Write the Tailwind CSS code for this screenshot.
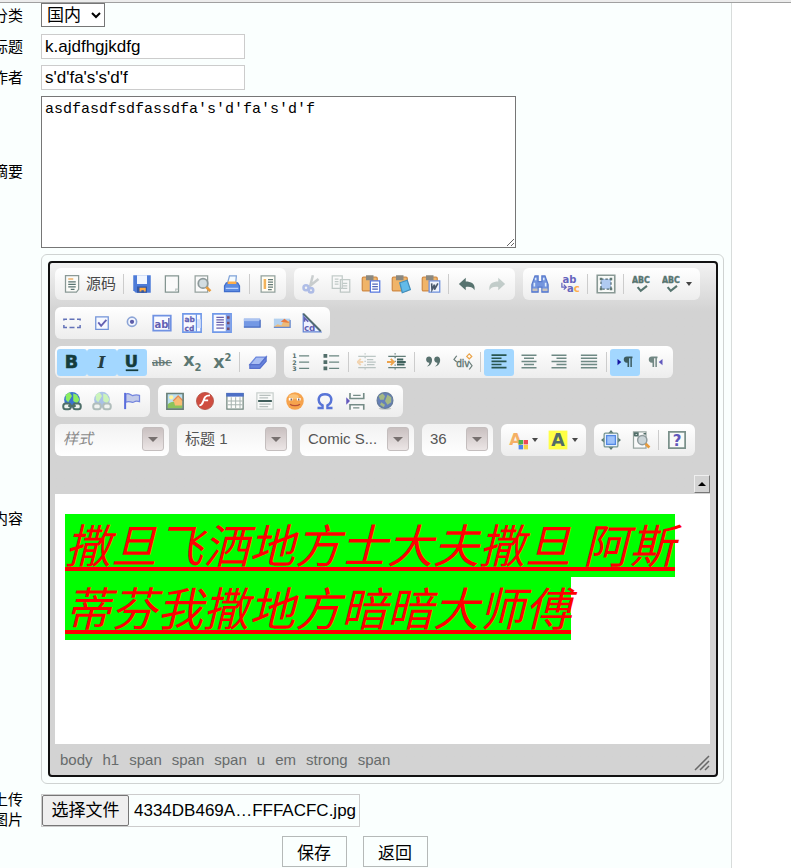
<!DOCTYPE html>
<html lang="zh-CN">
<head>
<meta charset="utf-8">
<meta name="viewport" content="width=device-width, initial-scale=1">
<title>内容编辑</title>
<script src="https://cdn.jsdelivr.net/npm/@tailwindcss/browser@4"></script>
</head>
<body class="bg-white text-black font-['Liberation_Sans','Noto_Sans_CJK_SC',sans-serif]">
<main class="mr-[59px] min-h-screen border-r border-[#d8dcdb] bg-[#fafffe]">
  <div class="-mr-[60px] h-[3px] border-b border-[#a0a0a0] bg-[#ececec]"></div>
  <form class="flex flex-col gap-1.5 [&_.lbl]:flex [&_.lbl]:w-[41px] [&_.lbl]:shrink-0 [&_.lbl]:justify-end [&_.lbl]:overflow-hidden [&_.lbl]:pr-[18px] [&_.lbl]:text-[15px] [&_.lbl]:leading-5 [&_.lbl]:whitespace-nowrap">
    <div class="flex h-[25px] items-center">
      <label class="lbl" for="cat">分类</label>
      <select id="cat" class="h-6 w-16 self-start border border-[#767676] bg-white px-px text-[17px] leading-5"><option>国内</option></select>
    </div>
    <div class="flex items-center">
      <label class="lbl" for="title">标题</label>
      <input id="title" type="text" value="k.ajdfhgjkdfg" class="h-[25px] w-[204px] border border-[#cccccc] bg-white px-[3px] text-[17px]">
    </div>
    <div class="flex items-center">
      <label class="lbl" for="author">作者</label>
      <input id="author" type="text" value="s'd'fa's's'd'f" class="h-[25px] w-[204px] border border-[#cccccc] bg-white px-[3px] text-[17px]">
    </div>
    <div class="flex items-center">
      <label class="lbl" for="summary">摘要</label>
      <textarea id="summary" class="block h-[152px] w-[475px] border border-[#767676] bg-white px-[3px] py-1 font-['Liberation_Mono',monospace] text-[15px] leading-[18px]">asdfasdfsdfassdfa's'd'fa's'd'f</textarea>
    </div>
    <div class="flex items-center">
      <span class="lbl">内容</span>
      <div class="mr-[7px] flex-1 rounded-md border border-[#cfd3d2] py-1.5 pr-[5px] pl-1.5">
        <div class="rounded-[4px] border-2 border-[#111111] bg-[#d3d3d3] bg-linear-to-b from-[#f2f2f2] to-[#d3d3d3] to-[48px] pt-[5px] pr-1.5 pl-[5px]">
          <div class="flex flex-col gap-[7px] [&_.g]:flex [&_.g]:h-8 [&_.g]:items-center [&_.g]:rounded-md [&_.g]:bg-linear-to-b [&_.g]:from-white [&_.g]:to-[#ededed] [&_.g]:pr-[3px] [&_.g]:pl-0.5 [&_.row]:flex [&_.row]:gap-2 [&_button]:flex [&_button]:h-[27px] [&_button]:min-w-[30px] [&_button]:items-center [&_button]:justify-center [&_button]:rounded-[3px] [&_svg]:size-5 [&_svg]:shrink-0 [&_i]:mr-[3px] [&_i]:ml-[2px] [&_i]:h-5 [&_i]:w-px [&_i]:bg-[#cccccc] [&_.c]:relative [&_.c]:h-8 [&_.c]:rounded-md [&_.c]:bg-linear-to-b [&_.c]:from-[#f2f2f2] [&_.c]:to-white [&_.c_select]:h-[30px] [&_.c_select]:w-full [&_.c_select]:appearance-none [&_.c_select]:pr-8 [&_.c_select]:pl-2 [&_.c_select]:text-[15px]">
            <div class="row">
              <div class="g">
                <button type="button" class="w-16 gap-1 text-[15px] text-[#484848]"><svg viewBox="0 0 16 16"><path d="M2.8 1.3h10.5v11l-1.8 2.2H2.8z" fill="#fbfbf8" stroke="#8a9996"/><path d="M5 4h4" stroke="#e9a150"/><path d="M5 6.2h6M5 8.2h6M5 10.2h6M7 12.2h3" stroke="#587370"/></svg>源码</button>
                <i></i>
                <button type="button" title="保存"><svg viewBox="0 0 16 16"><path d="M1 1h14v14H3l-2-2z" fill="#4d7bd8"/><path d="M4 1h8v7H4z" fill="#f1f6ff"/><path d="M4 10h8v5H4z" fill="#3457a2"/><path d="M6 11h5v3H6z" fill="#ffab42"/><path d="M7.500 13h2v2h-2z" fill="#3457a2"/></svg></button>
                <button type="button" title="新建"><svg viewBox="0 0 16 16"><path d="M2.700 1.500h10.500v13H2.700z" fill="#fafafa" stroke="#849591"/><path d="M11 14v-2h2" fill="none" stroke="#bbc4c2"/></svg></button>
                <button type="button" title="预览"><svg viewBox="0 0 16 16"><path d="M2.500 1.500h10v13h-10z" fill="#fafafa" stroke="#96a29f"/><circle cx="8.800" cy="7.500" r="3.800" fill="#d3dde1" stroke="#8d999a" stroke-width="1.400"/><path d="m11.500 10.500 3.200 3.200" stroke="#e79b3d" stroke-width="2.200"/></svg></button>
                <button type="button" title="打印"><svg viewBox="0 0 16 16"><path d="M6 1.500h5.500L11 7H4.500z" fill="#f4fbff" stroke="#7fa2d8"/><path d="M3.500 7 2 9.500V14h12V9.500L12.500 7z" fill="#5d8be0" stroke="#3f6dcc"/><path d="M4.500 6h7v2h-7z" fill="#ffad47"/><path d="M3 11.500h10" stroke="#b9d2ff"/></svg></button>
                <i></i>
                <button type="button" title="模板"><svg viewBox="0 0 16 16"><path d="M2.500 1.500h11v13h-11z" fill="#fffdf5" stroke="#92a19d"/><path d="M4.500 4h2v8h-2z" fill="#f2b35c"/><path d="M8 4.500h4M8 6.500h4M8 8.500h4M8 10.500h4M8 12.500h3" stroke="#667c79"/></svg></button>
              </div>
              <div class="g">
                <button type="button" title="剪切"><svg viewBox="0 0 16 16" opacity=".45"><path d="m9.500 1-2 8M14 4 6.500 10" stroke="#919b9c" stroke-width="2"/><g fill="none" stroke="#5d7cd8" stroke-width="2"><circle cx="4" cy="11" r="2"/><circle cx="8" cy="13" r="1.800"/></g></svg></button>
                <button type="button" title="复制"><svg viewBox="0 0 16 16" opacity=".45"><g fill="#fafafa" stroke="#819590"><path d="M1 1.500h8v10H1zM7.500 4.500H15v10H7.500z"/><path d="M3 4h3M3 6h3M3 8h3M9.500 7.500H13M9.500 9.500H13M9.500 11.500H13"/></g></svg></button>
                <button type="button" title="粘贴"><svg viewBox="0 0 16 16"><rect x="1" y="2.500" width="12" height="11" rx="1" fill="#f0b468" stroke="#cf8a45"/><path d="M4 1h6v4H4z" fill="#8a8880"/><path d="M7.500 5.500H15v9H7.500z" fill="#fff" stroke="#5577df"/><path d="M9 8h4.500M9 10h4.500M9 12h4.500" stroke="#5266b8"/></svg></button>
                <button type="button" title="粘贴为纯文本"><svg viewBox="0 0 16 16"><rect x="1" y="2.500" width="12" height="11" rx="1" fill="#f0b468" stroke="#cf8a45"/><path d="M4 1h6v4H4z" fill="#8a8880"/><path d="m7 7 6-2 2.500 7.500L9 15z" fill="#62bbe9" stroke="#438fbb"/></svg></button>
                <button type="button" title="从 Word 粘贴"><svg viewBox="0 0 16 16"><rect x="1" y="2.500" width="12" height="11" rx="1" fill="#f0b468" stroke="#cf8a45"/><path d="M4 1h6v4H4z" fill="#8a8880"/><path d="M6.500 5.500H15v9H6.500z" fill="#f0f4fc" stroke="#6c8edb"/><path d="m8.500 7.500.3 5 2-4v4l2.700-5" fill="none" stroke="#49596c" stroke-width="1.300"/></svg></button>
                <i></i>
                <button type="button" title="撤销"><svg viewBox="0 0 16 16"><path d="M1.500 8 7 3v3c4 0 8 1.500 7 7-1.500-2.500-3-3-7-2.700V13z" fill="#57736f"/></svg></button>
                <button type="button" title="重做"><svg viewBox="0 0 16 16" opacity=".4"><path d="M14.500 8 9 3v3c-4 0-8 1.500-7 7 1.500-2.500 3-3 7-2.700V13z" fill="#769089"/></svg></button>
              </div>
              <div class="g">
                <button type="button" title="查找"><svg viewBox="0 0 16 16"><path d="M4 1.500h2.500V6h3V1.500H12l2.500 7v6h-5v-4h-3v4h-5v-6z" fill="#7394de" stroke="#5a7acb"/><path d="M3.500 7v3M12.500 7v3M4.500 3v2M11 3v2" stroke="#dceafb" stroke-width="1.300"/><path d="M2 12.500h4M10 12.500h4" stroke="#c8c2bc" stroke-width="2"/></svg></button>
                <button type="button" title="替换"><svg viewBox="0 0 16 16" font-family="DejaVu Sans" font-weight="bold" font-size="8"><text x="2" y="7" fill="#6564bd">ab</text><text x="5.500" y="14.500" fill="#6564bd">a<tspan fill="#ffad49">c</tspan></text><path d="M1.500 7v3.500H5M3 8.500l2 2-2 2" fill="none" stroke="#6564bd"/></svg></button>
                <i></i>
                <button type="button" title="全选"><svg viewBox="0 0 16 16"><path d="M1 1h14v14H1z" fill="#f8faf8" stroke="#899995" stroke-width="1.300"/><path d="M4 4h8v8H4z" fill="#b0caf1" stroke="#506b75" stroke-dasharray="2 1.500"/><path d="M3 3h2v2H3zM11 3h2v2h-2zM3 11h2v2H3zM11 11h2v2h-2z" fill="#617975"/></svg></button>
                <i></i>
                <button type="button" title="拼写检查"><svg viewBox="0 0 16 16"><text x="0" y="7" font-family="DejaVu Sans Condensed" font-size="7" font-weight="bold" fill="#577570" stroke="#577570" stroke-width=".3">ABC</text><path d="m4.500 10.500 2.500 3 5-4" fill="none" stroke="#577570" stroke-width="1.700"/></svg></button>
                <button type="button" class="w-10" title="即时拼写检查"><svg viewBox="0 0 16 16"><text x="0" y="7" font-family="DejaVu Sans Condensed" font-size="7" font-weight="bold" fill="#577570" stroke="#577570" stroke-width=".3">ABC</text><path d="m4.500 10.500 2.500 3 5-4" fill="none" stroke="#577570" stroke-width="1.700"/></svg><span class="ml-1 border-x-[3px] border-t-4 border-x-transparent border-t-[#444444]"></span></button>
              </div>
            </div>
            <div class="row">
              <div class="g">
                <button type="button" title="表单"><svg viewBox="0 0 16 16"><path d="M1.500 6V5H4M6 5h4M12 5h2.500v1M14.500 9.500v2H12M10 11.500H6M4 11.500H1.500v-2" fill="none" stroke="#6372b8" stroke-width="1.200"/></svg></button>
                <button type="button" title="复选框"><svg viewBox="0 0 16 16"><path d="M3 3h10v10H3z" fill="#f7f9ff" stroke="#7192d8"/><path d="m5 7.500 2.300 2.800L11.500 5.500" fill="none" stroke="#6561b2" stroke-width="1.500"/></svg></button>
                <button type="button" title="单选按钮"><svg viewBox="0 0 16 16"><circle cx="8" cy="7" r="3.700" fill="#f4f7ff" stroke="#8da5d6" stroke-width="1.300"/><circle cx="8" cy="7" r="1.700" fill="#5d5da9"/></svg></button>
                <button type="button" title="单行文本"><svg viewBox="0 0 16 16"><path d="M1 2h14v12H1z" fill="#f9faff" stroke="#7092e3" stroke-width="1.400"/><text x="2" y="12" font-family="DejaVu Sans" font-weight="bold" font-size="8" fill="#625fb3">ab</text><path d="M13.500 4v9" stroke="#5059ad"/></svg></button>
                <button type="button" title="多行文本"><svg viewBox="0 0 16 16"><path d="M.7.700h14.600v14.600H.7z" fill="#f9faff" stroke="#7199e9" stroke-width="1.300"/><g font-family="DejaVu Sans" font-weight="bold" font-size="6" fill="#625fb3" stroke="#625fb3" stroke-width=".2"><text x="2" y="7">ab</text><text x="2" y="14">cd</text></g><path d="M11.500 1v14" stroke="#6996e8"/><path d="M12 5h3v7h-3z" fill="#d5e1fb"/></svg></button>
                <button type="button" title="列表"><svg viewBox="0 0 16 16"><path d="M.7.700h14.600v14.600H.7z" fill="#f9faff" stroke="#7199e9" stroke-width="1.300"/><path d="M3.500 3.500h6M3.500 5.500h6M3.500 7.500h6M3.500 9.500h6M3.500 12h6" stroke="#685fab"/><path d="M11 1h4v14h-4z" fill="#7c9be6"/><path d="M12 2.500h2v2h-2zM12 11.500h2v2h-2zM12 7h2v2h-2z" fill="#784e68"/></svg></button>
                <button type="button" title="按钮"><svg viewBox="0 0 16 16"><path d="M1.500 4.500h13v6.800h-13z" fill="#7398e4"/><path d="M1.500 4.500h13v2h-13z" fill="#acc4f1"/><path d="M1.500 11.300h13v-6" fill="none" stroke="#476bbf"/></svg></button>
                <button type="button" title="图像按钮"><svg viewBox="0 0 16 16"><path d="M1.500 4.500h13v7h-13z" fill="#b4d1ef"/><path d="m1.500 11 3-2 3 1 2-4.500 5 1v5h-13z" fill="#edbb79"/><path d="m7 7 3-2.500L14 8z" fill="#e8793f"/><path d="M1.500 11.500h13v-6" fill="none" stroke="#6589d0"/></svg></button>
                <button type="button" title="隐藏域"><svg viewBox="0 0 16 16"><path d="M1 1v14h14z" fill="#eef2ff" stroke="#6383d4"/><text x="1.500" y="14" font-family="DejaVu Sans" font-size="7" font-weight="bold" fill="#625fb3">cd</text><path d="M2 7V4l3 3" fill="none" stroke="#625fb3" stroke-width="1.300"/><path d="m1 .5 14 14" stroke="#526c70" stroke-width="1.500"/></svg></button>
              </div>
            </div>
            <div class="row">
              <div class="g">
                <button type="button" class="bg-[#a3d7ff]" title="加粗"><svg viewBox="0 0 16 16"><text x="2.200" y="12.800" font-family="DejaVu Sans" font-size="14" font-weight="bold" fill="#153c3c" stroke="#153c3c" stroke-width=".5">B</text></svg></button>
                <button type="button" class="bg-[#a3d7ff]" title="倾斜"><svg viewBox="0 0 16 16"><text x="4.500" y="12.800" font-family="DejaVu Serif" font-size="13" font-style="italic" font-weight="bold" fill="#263e43">I</text></svg></button>
                <button type="button" class="bg-[#a3d7ff]" title="下划线"><svg viewBox="0 0 16 16"><text x="2.200" y="11.800" font-family="DejaVu Sans" font-size="13" font-weight="bold" fill="#153c3c" stroke="#153c3c" stroke-width=".5">U</text><path d="M3 14.600h10" stroke="#153c3c" stroke-width="1.400"/></svg></button>
                <button type="button" title="删除线"><svg viewBox="0 0 16 16"><text x="0" y="11.500" font-family="Liberation Serif" font-size="10" font-weight="bold" fill="#71817e">abc</text><path d="M0 8.500h16" stroke="#607874"/></svg></button>
                <button type="button" title="下标"><svg viewBox="0 0 16 16" font-family="DejaVu Sans" font-weight="bold" fill="#5c7772"><text x="1" y="11.500" font-size="14">x</text><text x="10" y="15" font-size="8">2</text></svg></button>
                <button type="button" title="上标"><svg viewBox="0 0 16 16" font-family="DejaVu Sans" font-weight="bold" fill="#5c7772"><text x="1" y="13" font-size="14">x</text><text x="10" y="7.500" font-size="8">2</text></svg></button>
                <i></i>
                <button type="button" title="清除格式"><svg viewBox="0 0 16 16"><path d="m1.500 10 5-6h8l-5 6z" fill="#a8bdf3" stroke="#6c88dd"/><path d="M1.500 10v3h8l5-5.500V4l-5 6z" fill="#6784de" stroke="#5770cc"/></svg></button>
              </div>
              <div class="g">
                <button type="button" title="编号列表"><svg viewBox="0 0 16 16"><text font-family="DejaVu Sans" font-size="5" font-weight="bold" fill="#526e6a"><tspan x="1" y="4.500">1</tspan><tspan x="1" y="10">2</tspan><tspan x="1" y="15.500">3</tspan></text><path d="M6.500 3h8M6.500 8h8M6.500 13h8" stroke="#698580"/></svg></button>
                <button type="button" title="项目列表"><svg viewBox="0 0 16 16"><path d="M2 1.500h3v3H2zM2 6.500h3v3H2zM2 11.500h3v3H2z" fill="#526e6a"/><path d="M6.500 3h8M6.500 8h8M6.500 13h8" stroke="#698580"/></svg></button>
                <i></i>
                <button type="button" title="减少缩进"><svg viewBox="0 0 16 16" opacity=".4"><path d="M1 3.500h14M1 12.500h14" stroke="#637e79"/><path d="M8 6h5M8 8h7M8 10h6" stroke="#637e79"/><path d="M6.500 1v14" stroke="#637e79" stroke-dasharray="1 2"/><path d="M0 8h5M3 5.500.5 8 3 10.500" stroke="#eda34c" fill="none" stroke-width="1.500"/></svg></button>
                <button type="button" title="增加缩进"><svg viewBox="0 0 16 16"><path d="M1 3.500h14M1 12.500h14" stroke="#637e79"/><path d="M8 6h5M8 8h7M8 10h6" stroke="#3f625d" stroke-width="1.500"/><path d="M6.500 1v14" stroke="#637e79" stroke-dasharray="1 2"/><path d="M0 8h5M3 5.500 5.500 8 3 10.500" stroke="#eda34c" fill="none" stroke-width="1.500"/></svg></button>
                <i></i>
                <button type="button" title="引用"><svg viewBox="0 0 16 16"><path d="M5 3.500a2.500 2.500 0 1 0 0 5c0 1.500-.8 2.300-2 3C8 11 8.500 3.500 5 3.500zM11.500 3.500a2.500 2.500 0 1 0 0 5c0 1.500-.8 2.300-2 3 5-.5 5.500-8 2-8z" fill="#57716e"/></svg></button>
                <button type="button" title="DIV 容器"><svg viewBox="0 0 16 16"><text x="2.500" y="12" font-family="DejaVu Sans Condensed" font-size="8" fill="#5e7772" stroke="#5e7772" stroke-width=".3">div</text><path d="M3 3 .8 6 3 8M13 8l2.200 3-2.200 3" stroke="#6a7d79" fill="none"/><path d="m13 1.500 2 2-2 2-2-2z" stroke="#eba348" fill="none"/></svg></button>
                <i></i>
                <button type="button" class="bg-[#a3d7ff]" title="左对齐"><svg viewBox="0 0 16 16"><path d="M2 2.500h12M2 5h8M2 7.500h12M2 10h8M2 12.500h12" stroke="#285650" stroke-width="1.300"/></svg></button>
                <button type="button" title="居中"><svg viewBox="0 0 16 16"><path d="M2 2.500h12M4 5h8M2 7.500h12M4 10h8M2 12.500h12" stroke="#6e8984" stroke-width="1.200"/></svg></button>
                <button type="button" title="右对齐"><svg viewBox="0 0 16 16"><path d="M2 2.500h12M6 5h8M2 7.500h12M6 10h8M2 12.500h12" stroke="#6e8984" stroke-width="1.200"/></svg></button>
                <button type="button" title="两端对齐"><svg viewBox="0 0 16 16"><path d="M1.500 2.500h13M1.500 5h13M1.500 7.500h13M1.500 10h13M1.500 12.500h13" stroke="#6e8984" stroke-width="1.200"/></svg></button>
                <i></i>
                <button type="button" class="bg-[#a3d7ff]" title="文字方向从左到右"><svg viewBox="0 0 16 16"><path d="m2 5.500 3 2.500-3 2.500z" fill="#1515a1"/><path d="M14 3.500H9.500a2.500 2.500 0 0 0 0 5h.5V12h1.300V5h1v7h1.200V5h.5z" fill="#3c5c60"/></svg></button>
                <button type="button" title="文字方向从右到左"><svg viewBox="0 0 16 16"><path d="m14 5.500-3 2.500 3 2.500z" fill="#6259bd"/><path d="M10 3.500H5.500a2.500 2.500 0 0 0 0 5H6V12h1.300V5h1v7h1.200V5h.5z" fill="#718783"/></svg></button>
              </div>
            </div>
            <div class="row">
              <div class="g">
                <button type="button" title="超链接"><svg viewBox="0 0 16 16"><circle cx="8" cy="7" r="6.300" fill="#3975ce"/><path d="m3 3 3-2 2 3-3 5-2-2zM9 2l3 1 2 4-2 3-3-2z" fill="#8bed61"/><g fill="#edf3ef" stroke="#4e6f69" stroke-width="1.600"><rect x="1" y="10" width="6" height="4.500" rx="2"/><rect x="9" y="10" width="6" height="4.500" rx="2"/><path d="M5 12h6"/></g></svg></button>
                <button type="button" title="取消超链接"><svg viewBox="0 0 16 16" opacity=".4"><circle cx="8" cy="7" r="6.300" fill="#3975ce"/><path d="m3 3 3-2 2 3-3 5-2-2zM9 2l3 1 2 4-2 3-3-2z" fill="#8bed61"/><g fill="#edf3ef" stroke="#4e6f69" stroke-width="1.600"><rect x="1" y="10" width="6" height="4.500" rx="2"/><rect x="9" y="10" width="6" height="4.500" rx="2"/></g></svg></button>
                <button type="button" title="锚点"><svg viewBox="0 0 16 16"><path d="M3 2.500c3-2 4 2 6 1 2-.5 3-.5 5 0v5c-3-1-4 0-5 .5C7 9.500 6 7.500 3 9z" fill="#c3cbe9" stroke="#7384de"/><path d="M2.500 1.500v13" stroke="#5a6ddc" stroke-width="1.600"/></svg></button>
              </div>
              <div class="g">
                <button type="button" title="图像"><svg viewBox="0 0 16 16"><path d="M1.500 2h13v12.500h-13z" fill="#bbdff1"/><path d="M2 11c3-4 6-2 12-2v5H2z" fill="#8cc35b"/><path d="m7 8 3.500-3.500L14 8v3.500H8z" fill="#f8bd74"/><path d="m6.500 8 4-4L14.500 8" fill="none" stroke="#e98a50"/><circle cx="5" cy="5" r="1.700" fill="#fff5a1"/><path d="M1.500 2h13v12.500h-13z" fill="none" stroke="#6a8078" stroke-width="1.300"/></svg></button>
                <button type="button" title="Flash"><svg viewBox="0 0 16 16"><circle cx="8" cy="8" r="6.800" fill="#cf4d40" stroke="#b35145" stroke-width=".7"/><path d="M12 3.500c-4 0-4.500 2-5.500 5-.7 2-1.200 3-3 3M6.500 7.500h4" fill="none" stroke="#fff" stroke-width="1.500"/></svg></button>
                <button type="button" title="表格"><svg viewBox="0 0 16 16"><path d="M1.500 2h13v12.500h-13z" fill="#fdfdfb" stroke="#71867f"/><path d="M1 1.500h14v3H1z" fill="#4d6fc6"/><path d="M5 5v9M8.500 5v9M12 5v9M2 8h12M2 11h12" stroke="#a8b4b1" stroke-width=".8"/></svg></button>
                <button type="button" title="水平线"><svg viewBox="0 0 16 16"><path d="M1.500 1.500h13v13h-13z" fill="#f9faf9" stroke="#c9cfcd"/><path d="M3.500 3.500h9M3.500 5.500h7M3.500 10.500h9M3.500 12.500h7" stroke="#b7bfbd"/><path d="M2.500 8h11" stroke="#415f5c" stroke-width="1.600"/></svg></button>
                <button type="button" title="表情符"><svg viewBox="0 0 16 16"><circle cx="8" cy="8" r="7" fill="#f6a34d"/><ellipse cx="7" cy="4.500" rx="4" ry="2" fill="#fac278"/><path d="M3 6.500h3M9.500 6.500h3" stroke="#fff" stroke-width="2"/><path d="M5 6v1.500M11 6v1.500" stroke="#705047"/><path d="M4 10.500c2 1.500 6 1.500 8 0" fill="none" stroke="#ba5137"/></svg></button>
                <button type="button" title="特殊符号"><svg viewBox="0 0 16 16"><path d="M2 13.500h4v-2C1 8.500 2.500 2.500 8 2.500s7 6 2 9v2h4" fill="none" stroke="#5874d7" stroke-width="2"/></svg></button>
                <button type="button" title="分页符"><svg viewBox="0 0 16 16"><path d="m1 5 3 3-3 3z" fill="#6459bd"/><path d="M4 1.500V6h11V1.500M4 15v-4h11v4" fill="#fafafa" stroke="#758c87" stroke-width="1.300"/><path d="M6.500 3.500h6M6.500 13.500h5" stroke="#758c87"/></svg></button>
                <button type="button" title="IFrame"><svg viewBox="0 0 16 16"><ellipse cx="8" cy="14" rx="5" ry="1" fill="#c5cac7"/><circle cx="8" cy="7.500" r="6.300" fill="#6680b9" stroke="#657c9c"/><path d="m3 4 3-2 2 2-1 3H4zM10 3l3 2v4l-3 2-2-3zM5 9l3 2-1 2-3-2z" fill="#a4b884"/></svg></button>
              </div>
            </div>
            <div class="row">
              <div class="c w-[114px]"><select class="text-[#8a8a8a] italic" aria-label="样式"><option>样式</option></select><span class="pointer-events-none absolute top-[3px] right-[5px] flex h-6 w-[22px] items-center justify-center rounded-[3px] border border-[#c4bebe] bg-linear-to-b from-[#c9c0c0] to-[#ece6e6]"><span class="border-x-[5px] border-t-[5px] border-x-transparent border-t-[#77706f]"></span></span></div>
              <div class="c w-[115px]"><select class="text-[#555555]" aria-label="格式"><option>标题 1</option></select><span class="pointer-events-none absolute top-[3px] right-[5px] flex h-6 w-[22px] items-center justify-center rounded-[3px] border border-[#c4bebe] bg-linear-to-b from-[#c9c0c0] to-[#ece6e6]"><span class="border-x-[5px] border-t-[5px] border-x-transparent border-t-[#77706f]"></span></span></div>
              <div class="c w-[114px]"><select class="text-[#555555]" aria-label="字体"><option>Comic S...</option></select><span class="pointer-events-none absolute top-[3px] right-[5px] flex h-6 w-[22px] items-center justify-center rounded-[3px] border border-[#c4bebe] bg-linear-to-b from-[#c9c0c0] to-[#ece6e6]"><span class="border-x-[5px] border-t-[5px] border-x-transparent border-t-[#77706f]"></span></span></div>
              <div class="c w-[71px]"><select class="text-[#555555]" aria-label="大小"><option>36</option></select><span class="pointer-events-none absolute top-[3px] right-[5px] flex h-6 w-[22px] items-center justify-center rounded-[3px] border border-[#c4bebe] bg-linear-to-b from-[#c9c0c0] to-[#ece6e6]"><span class="border-x-[5px] border-t-[5px] border-x-transparent border-t-[#77706f]"></span></span></div>
              <div class="g">
                <button type="button" class="w-10" title="文本颜色"><svg viewBox="0 0 16 16"><text x="1" y="12" font-family="DejaVu Sans" font-size="13" font-weight="bold" fill="#f5b065">A</text><path d="M8.500 8H12v3.500H8.500z" fill="#4bb14b"/><path d="M12.500 8H16v3.500h-3.500z" fill="#ed4854"/><path d="M8.500 12H12v3.500H8.500z" fill="#4b84ef"/><path d="M12.500 12H16v3.500h-3.500z" fill="#f5cf46"/></svg><span class="ml-1 border-x-[3px] border-t-4 border-x-transparent border-t-[#484848]"></span></button>
                <button type="button" class="w-10" title="背景颜色"><svg viewBox="0 0 16 16"><path d="M.5.500h15v15H.5z" fill="#ffff45"/><text x="2.500" y="13" font-family="DejaVu Sans" font-size="14" font-weight="bold" fill="#526d67">A</text></svg><span class="ml-1 border-x-[3px] border-t-4 border-x-transparent border-t-[#484848]"></span></button>
              </div>
              <div class="g">
                <button type="button" title="全屏"><svg viewBox="0 0 16 16"><path d="m8 0 2.500 3h-5zM8 16l2.500-3h-5zM0 8l3-2.500v5zM16 8l-3-2.500v5z" fill="#587672"/><rect x="2.500" y="2.500" width="11" height="11" rx="1" fill="#e4efff" stroke="#789590"/><path d="M4.500 4.500h7v7h-7z" fill="#9ec2fa" stroke="#5489e3"/></svg></button>
                <button type="button" title="显示区块"><svg viewBox="0 0 16 16"><path d="M2 1.500h10v13H2z" fill="#fafafa" stroke="#98a5a1"/><path d="M3 5V2.500h2.500v2H3M10 3h2" fill="none" stroke="#506d68" stroke-width="1.300"/><circle cx="9" cy="8" r="3.700" fill="#cbd5d9" stroke="#909c9e" stroke-width="1.200"/><path d="m11.700 11 3 3" stroke="#e79b3d" stroke-width="2.200"/></svg></button>
                <i></i>
                <button type="button" title="关于"><svg viewBox="0 0 16 16"><path d="M1.500 1.500h13v13h-13z" fill="#f8faf9" stroke="#7b918b" stroke-width="1.400"/><text x="4.500" y="12.500" font-family="DejaVu Sans" font-size="12" font-weight="bold" fill="#6057bb">?</text></svg></button>
              </div>
            </div>
          </div>
          <div class="flex justify-end pt-[19px] pb-px">
            <button type="button" aria-label="收起工具栏" class="flex h-[18px] w-4 items-center justify-center border border-t-[#efefef] border-r-[#777777] border-b-[#777777] border-l-[#efefef] bg-[#d3d3d3]"><span class="border-x-4 border-b-4 border-x-transparent border-b-black"></span></button>
          </div>
          <div class="h-[250px] bg-white px-2.5 pt-5" contenteditable="true" role="textbox" aria-label="内容">
            <h1 class="font-['Open_Sans','Noto_Sans_CJK_SC',sans-serif] text-[46px] leading-[63px] font-normal text-[#ff0000]"><u class="bg-[#00ff00] pb-px decoration-4 underline-offset-4 [text-decoration-skip-ink:none]"><em><strong class="font-normal">撒旦飞洒地方士大夫撒旦 阿斯蒂芬我撒地方暗暗大师傅</strong></em></u></h1>
          </div>
          <div class="flex h-[31px] items-center justify-between text-[15px] text-[#676b6b]">
            <div class="flex gap-2.5 pt-px pl-[5px]"><a href="#">body</a><a href="#">h1</a><a href="#">span</a><a href="#">span</a><a href="#">span</a><a href="#">u</a><a href="#">em</a><a href="#">strong</a><a href="#">span</a></div>
            <svg class="mb-1 size-4 self-end" viewBox="0 0 16 16" stroke="#686868" stroke-width="1.500"><path d="M1 15 15 1M6 15l9-9M11 15l4-4"/></svg>
          </div>
        </div>
      </div>
    </div>
    <div class="flex items-center">
      <label class="lbl" for="pic">上传<br>图片</label>
      <div class="relative flex h-[33px] w-[319px] items-center border border-[#cccccc] text-[17px]">
        <span class="flex h-[31px] w-[87px] items-center justify-center rounded-[2px] border border-[#767676] bg-[#efefef] pt-0.5">选择文件</span>
        <span class="pt-0.5 pl-[5px]">4334DB469A…FFFACFC.jpg</span>
        <input id="pic" type="file" class="absolute inset-0 opacity-0">
      </div>
    </div>
    <div class="flex justify-center gap-4 pr-[22px]">
      <button type="submit" class="h-[31px] w-[65px] border border-[#b5b9b8] pt-1 text-[17px] leading-6">保存</button>
      <button type="button" class="h-[31px] w-[65px] border border-[#b5b9b8] pt-1 text-[17px] leading-6">返回</button>
    </div>
  </form>
</main>
</body>
</html>
